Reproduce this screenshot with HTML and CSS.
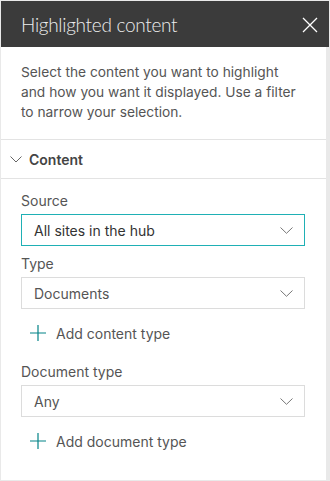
FILE: index.html
```html
<!DOCTYPE html>
<html lang="en">
<head>
    <meta charset="UTF-8">
    <title>Highlighted content</title>
    <link rel="stylesheet" href="styles.css">
</head>
<body>

    <div class="pane">
        <header class="pane-header">
            <h1 class="pane-title">Highlighted content</h1>
            <button class="close" aria-label="Close">
                <svg width="16" height="16" viewBox="0 0 16 16"><path d="M1 1L15 15M15 1L1 15" stroke="#fff" stroke-width="1.3" fill="none"/></svg>
            </button>
        </header>

        <div class="pane-body">
            <p class="intro">Select the content you want to highlight and how you want it displayed. Use a filter to narrow your selection.</p>

            <!-- Content group -->
            <div class="group-head">
                <svg class="chev" width="12" height="7" viewBox="0 0 12 7"><path d="M0.5 0.5L6 6L11.5 0.5" stroke="#666" fill="none"/></svg>
                <span>Content</span>
            </div>

            <div class="group">
                <label class="field-label">Source</label>
                <div class="dropdown focused">
                    <span>All sites in the hub</span>
                    <svg class="caret" width="13" height="7" viewBox="0 0 13 7"><path d="M0.5 0.5L6.5 6.3L12.5 0.5" stroke="#777" fill="none"/></svg>
                </div>

                <label class="field-label">Type</label>
                <div class="dropdown">
                    <span>Documents</span>
                    <svg class="caret" width="13" height="7" viewBox="0 0 13 7"><path d="M0.5 0.5L6.5 6.3L12.5 0.5" stroke="#777" fill="none"/></svg>
                </div>

                <div class="add-link">
                    <svg width="16" height="16" viewBox="0 0 16 16"><path d="M8 0V16M0 8H16" stroke="#038387" stroke-width="1.2" fill="none"/></svg>
                    <span>Add content type</span>
                </div>

                <label class="field-label">Document type</label>
                <div class="dropdown">
                    <span>Any</span>
                    <svg class="caret" width="13" height="7" viewBox="0 0 13 7"><path d="M0.5 0.5L6.5 6.3L12.5 0.5" stroke="#777" fill="none"/></svg>
                </div>

                <div class="add-link">
                    <svg width="16" height="16" viewBox="0 0 16 16"><path d="M8 0V16M0 8H16" stroke="#038387" stroke-width="1.2" fill="none"/></svg>
                    <span>Add document type</span>
                </div>
            </div>
        </div>
    </div>

</body>
</html>
```

FILE: styles.css
```css
body {
    margin: 0;
    background-color: #e9e9e9;
    font-family: 'Inter', 'Liberation Sans', sans-serif;
    color: #333;
}

.pane {
    width: 328px;
    height: 479px;
    padding: 1px 1px 0 1px;
    display: flex;
    flex-direction: column;
}

.pane-header {
    height: 46px;
    background-color: #3b3b3b;
    display: flex;
    align-items: center;
    justify-content: space-between;
    padding: 0 11px 0 20px;
    flex-shrink: 0;
}

.pane-title {
    margin: 0;
    font-family: 'Lato', 'Open Sans', sans-serif;
    font-size: 19px;
    font-weight: 300;
    letter-spacing: -0.3px;
    color: #ededed;
}

.close {
    background: none;
    border: none;
    padding: 0;
    width: 16px;
    height: 16px;
    margin-top: 1px;
}

.pane-body {
    flex: 1;
    background-color: #fff;
    margin-right: 3px;
}

.intro {
    margin: 0;
    padding: 15px 20px 17px 20px;
    font-size: 13.75px;
    line-height: 20px;
    color: #555;
}

.group-head {
    height: 38px;
    border-top: 1px solid #e3e3e3;
    border-bottom: 1px solid #e3e3e3;
    display: flex;
    align-items: center;
    padding-left: 9px;
    font-size: 14px;
    font-weight: 600;
    color: #444;
}

.group-head .chev {
    margin-right: 7px;
}

.group {
    padding: 12px 21px 0 20px;
    display: flex;
    flex-direction: column;
}

.field-label {
    font-size: 14px;
    color: #555;
    line-height: 20px;
    margin-bottom: 3px;
}

.dropdown {
    height: 30px;
    border: 1px solid #dcdcdc;
    display: flex;
    align-items: center;
    justify-content: space-between;
    padding: 0 11px 0 12px;
    font-size: 14px;
    color: #555;
    margin-bottom: 8px;
}

.dropdown.focused {
    border-color: #1fb0b5;
    color: #333;
}

.add-link {
    display: flex;
    align-items: center;
    height: 30px;
    padding-left: 9px;
    font-size: 14px;
    color: #555;
    margin: 1px 0 14px 0;
}

.add-link svg {
    margin-right: 10px;
}
```
